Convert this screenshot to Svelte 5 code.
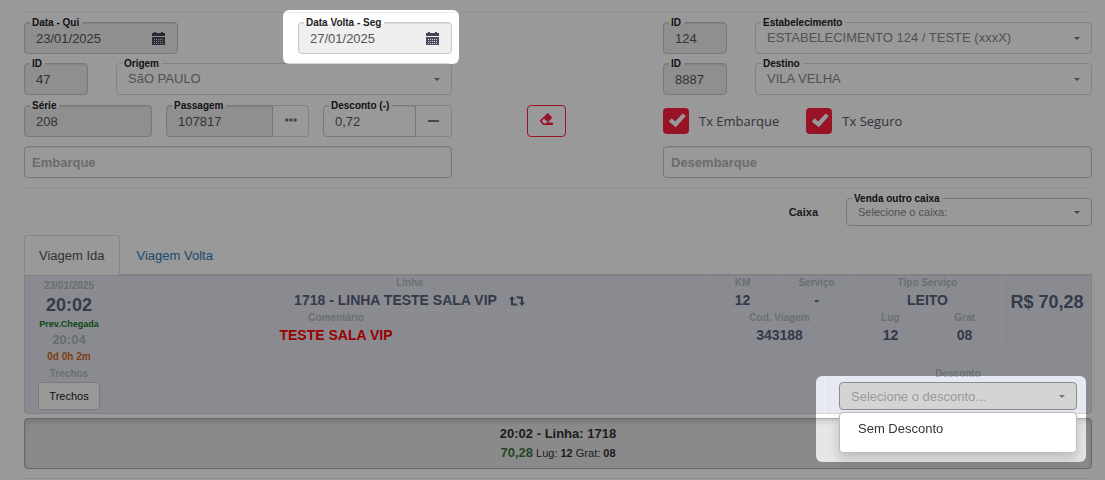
<script lang="ts">
  let dataIda = "23/01/2025";
  let dataVolta = "27/01/2025";
  let idOrigem = "47";
  let serie = "208";
  let passagem = "107817";
  let desconto = "0,72";
  let idEstabelecimento = "124";
  let idDestino = "8887";
  let txEmbarque = true;
  let txSeguro = true;
  let embarque = "";
  let desembarque = "";
  let aba = "ida";
  let menuAberto = true;

  const descontos = ["Sem Desconto"];
</script>

{#snippet calendario()}
  <svg width="13" height="13" viewBox="0 0 13 13" aria-hidden="true">
    <path d="M0 1h2V0h2v1h5V0h2v1h2v3H0z" fill="#44464f" />
    <path d="M0 5h13v8H0z" fill="#4a4e5c" />
    <path
      d="M2 7.5h10M2 9.5h10M2 11.5h10"
      stroke="#c8d2e0"
      stroke-dasharray="1 1"
    />
  </svg>
{/snippet}

{#snippet seta()}
  <svg class="seta" width="6" height="3" viewBox="0 0 6 3" aria-hidden="true">
    <path d="M0 0h6L3 3z" fill="currentColor" />
  </svg>
{/snippet}

{#snippet marca()}
  <svg width="26" height="26" viewBox="0 0 26 26" aria-hidden="true">
    <path d="M5.7 13.4 8.7 10.3 12.1 13.5 19.7 5.5 22.8 8 12.8 19.3z" fill="#fff" />
  </svg>
{/snippet}

<main class="venda">
  <div class="formulario">
    <div class="coluna">
      <div class="linha entre">
        <div class="campo data">
          <label for="data-ida">Data - Qui</label>
          <div class="caixa cinza">
            <input id="data-ida" bind:value={dataIda} readonly />
            <button class="btn-icone" aria-label="Abrir calendário">
              {@render calendario()}
            </button>
          </div>
        </div>
        <div class="campo data">
          <span class="destaque destaque-data"></span>
          <label for="data-volta">Data Volta - Seg</label>
          <div class="caixa cinza">
            <input id="data-volta" bind:value={dataVolta} readonly />
            <button class="btn-icone" aria-label="Abrir calendário">
              {@render calendario()}
            </button>
          </div>
        </div>
      </div>

      <div class="linha larga">
        <div class="campo id">
          <label for="id-origem">ID</label>
          <div class="caixa cinza">
            <input id="id-origem" bind:value={idOrigem} readonly />
          </div>
        </div>
        <div class="campo cresce">
          <label for="origem">Origem</label>
          <div class="caixa selecao">
            <select id="origem"><option>SãO PAULO</option></select>
            {@render seta()}
          </div>
        </div>
      </div>

      <div class="linha">
        <div class="campo cresce">
          <label for="serie">Série</label>
          <div class="caixa cinza">
            <input id="serie" bind:value={serie} readonly />
          </div>
        </div>
        <div class="campo passagem">
          <label for="passagem">Passagem</label>
          <div class="caixa cinza grupo">
            <input id="passagem" bind:value={passagem} readonly />
          </div>
          <button class="btn-grupo" aria-label="Buscar passagem">
            <svg width="12" height="4" viewBox="0 0 12 4" aria-hidden="true">
              <circle cx="1.8" cy="2" r="1.7" />
              <circle cx="6" cy="2" r="1.7" />
              <circle cx="10.2" cy="2" r="1.7" />
            </svg>
          </button>
        </div>
        <div class="campo desconto">
          <label for="desconto">Desconto (-)</label>
          <div class="caixa grupo">
            <input id="desconto" bind:value={desconto} />
          </div>
          <button class="btn-grupo" aria-label="Diminuir desconto">
            <svg width="11" height="2" viewBox="0 0 11 2" aria-hidden="true">
              <path d="M0 0h11v2H0z" />
            </svg>
          </button>
        </div>
      </div>

      <div class="caixa">
        <input
          class="ponto"
          aria-label="Embarque"
          placeholder="Embarque"
          bind:value={embarque}
        />
      </div>
    </div>

    <div class="acao">
      <button class="btn-limpar" aria-label="Limpar">
        <svg width="13" height="12" viewBox="0 0 13 12" aria-hidden="true">
          <path
            fill-rule="evenodd"
            d="M7.8 0 12.3 4.6 8 9.6H13V12H3.2L0 8.6V7.2zM4 5.8 1.7 7.9 4.2 10.4H5.6L7.6 8.6z"
            fill="currentColor"
          />
        </svg>
      </button>
    </div>

    <div class="coluna">
      <div class="linha larga">
        <div class="campo id">
          <label for="id-estab">ID</label>
          <div class="caixa cinza">
            <input id="id-estab" bind:value={idEstabelecimento} readonly />
          </div>
        </div>
        <div class="campo cresce">
          <label for="estab">Estabelecimento</label>
          <div class="caixa selecao">
            <select id="estab">
              <option>ESTABELECIMENTO 124 / TESTE (xxxX)</option>
            </select>
            {@render seta()}
          </div>
        </div>
      </div>

      <div class="linha larga">
        <div class="campo id">
          <label for="id-destino">ID</label>
          <div class="caixa cinza">
            <input id="id-destino" bind:value={idDestino} readonly />
          </div>
        </div>
        <div class="campo cresce">
          <label for="destino">Destino</label>
          <div class="caixa selecao">
            <select id="destino"><option>VILA VELHA</option></select>
            {@render seta()}
          </div>
        </div>
      </div>

      <div class="linha taxas">
        <label class="taxa">
          <span class="marcador">
            <input type="checkbox" bind:checked={txEmbarque} />
            {#if txEmbarque}{@render marca()}{/if}
          </span>
          Tx Embarque
        </label>
        <label class="taxa">
          <span class="marcador">
            <input type="checkbox" bind:checked={txSeguro} />
            {#if txSeguro}{@render marca()}{/if}
          </span>
          Tx Seguro
        </label>
      </div>

      <div class="caixa">
        <input
          class="ponto"
          aria-label="Desembarque"
          placeholder="Desembarque"
          bind:value={desembarque}
        />
      </div>
    </div>
  </div>

  <div class="linha-caixa">
    <strong>Caixa</strong>
    <div class="campo outro-caixa">
      <label for="outro-caixa">Venda outro caixa</label>
      <div class="caixa selecao pequena">
        <select id="outro-caixa"><option>Selecione o caixa:</option></select>
        {@render seta()}
      </div>
    </div>
  </div>

  <div class="abas" role="tablist">
    <button
      role="tab"
      class:ativa={aba === "ida"}
      aria-selected={aba === "ida"}
      on:click={() => (aba = "ida")}>Viagem Ida</button
    >
    <button
      role="tab"
      class:ativa={aba === "volta"}
      aria-selected={aba === "volta"}
      on:click={() => (aba = "volta")}>Viagem Volta</button
    >
  </div>

  <section class="viagem">
    <div class="topo">
      <div class="horarios">
        <span class="rotulo">{dataIda}</span>
        <span class="hora">20:02</span>
        <span class="previsao">Prev.Chegada</span>
        <span class="chegada">20:04</span>
        <span class="duracao">0d 0h 2m</span>
      </div>
      <div class="dados">
        <div class="dado c8">
          <span class="rotulo">Linha</span>
          <span class="valor">
            1718 - LINHA TESTE SALA VIP
            <svg width="16" height="10" viewBox="0 0 16 10" aria-hidden="true">
              <path
                d="M3 0 6 3.4H4V7.5H7.5L9 9.5H3Q2 9.5 2 8.5V3.4H0zM7 .5h6q1 0 1 1v5.1h2L13 10 10 6.6h2V2.5H8.5z"
                fill="currentColor"
              />
            </svg>
          </span>
        </div>
        <div class="dado">
          <span class="rotulo">KM</span><span class="valor">12</span>
        </div>
        <div class="dado">
          <span class="rotulo">Serviço</span><span class="valor">-</span>
        </div>
        <div class="dado c2">
          <span class="rotulo">Tipo Serviço</span><span class="valor">LEITO</span>
        </div>
        <div class="dado c6">
          <span class="rotulo">Comentário</span>
          <span class="valor alerta">TESTE SALA VIP</span>
        </div>
        <div class="dado c2 vazio"></div>
        <div class="dado c2">
          <span class="rotulo">Cod. Viagem</span><span class="valor">343188</span>
        </div>
        <div class="dado">
          <span class="rotulo">Lug</span><span class="valor">12</span>
        </div>
        <div class="dado">
          <span class="rotulo">Grat</span><span class="valor">08</span>
        </div>
      </div>
      <div class="preco">R$ 70,28</div>
    </div>

    <div class="base">
      <div class="trechos">
        <span class="rotulo">Trechos</span>
        <button>Trechos</button>
      </div>
      <div class="escolha">
        <label class="rotulo" for="tipo-desconto">Desconto</label>
        <div class="suspenso">
          <span class="destaque destaque-desconto"></span>
          <div class="caixa selecao aberta">
            <select
              id="tipo-desconto"
              on:mousedown|preventDefault={() => (menuAberto = !menuAberto)}
            >
              <option>Selecione o desconto...</option>
            </select>
            {@render seta()}
          </div>
          {#if menuAberto}
            <ul class="menu">
              {#each descontos as item}
                <li>{item}</li>
              {/each}
            </ul>
          {/if}
        </div>
      </div>
    </div>
  </section>

  <button class="resumo">
    <span class="resumo-linha">20:02 - Linha: 1718</span>
    <span class="resumo-info">
      <b class="total">70,28</b> Lug: <b>12</b> Grat: <b>08</b>
    </span>
  </button>
  <hr />
</main>

<div class="sombra"></div>

<style>
  :global(body) {
    background: #fff;
  }

  .venda {
    padding: 12px 13px 0 24px;
    font-family: "Liberation Sans", Arial, sans-serif;
    font-size: 13px;
    color: #333;
  }

  .venda * {
    box-sizing: border-box;
  }

  input,
  select,
  button {
    font: inherit;
    color: inherit;
    margin: 0;
  }

  button {
    cursor: pointer;
  }

  /* escurece a tela e deixa só os destaques claros */
  .sombra {
    position: fixed;
    inset: 0;
    background: rgba(0, 0, 0, 0.4);
    z-index: 2;
    pointer-events: none;
  }

  .destaque {
    position: absolute;
    z-index: 3;
    border-radius: 6px;
    backdrop-filter: brightness(1.67);
    pointer-events: none;
  }

  .destaque-data {
    inset: -12px -7px -10px -15px;
  }

  .destaque-desconto {
    inset: -6px -9px -52px -23px;
  }

  .formulario {
    display: grid;
    grid-template-columns: 428fr 211fr 429fr;
    border-top: 1px solid #eee;
    border-bottom: 1px solid #eee;
    padding: 9px 0;
  }

  .coluna {
    display: flex;
    flex-direction: column;
    gap: 9px;
  }

  .linha {
    display: flex;
    gap: 14px;
  }

  .linha:nth-child(3) {
    margin-top: 1px;
  }

  .linha.entre {
    justify-content: space-between;
  }

  .linha.larga {
    gap: 28px;
  }

  .campo {
    position: relative;
    display: flex;
  }

  .campo > label {
    position: absolute;
    left: 6px;
    top: -6px;
    padding: 0 3px 0 2px;
    font-size: 10px;
    line-height: 13px;
    font-weight: bold;
    color: #222;
    background: linear-gradient(#fff 8px, transparent 8px);
    z-index: 1;
  }

  .campo .caixa {
    flex: 1;
  }

  .caixa {
    display: flex;
    align-items: center;
    height: 32px;
    min-width: 0;
    border: 1px solid #c8c8c8;
    border-radius: 4px;
    background: #fff;
    box-shadow: inset 0 1px 1px rgba(0, 0, 0, 0.08);
  }

  .cinza {
    background: #eee;
  }

  .caixa input {
    flex: 1;
    min-width: 0;
    width: 100%;
    height: 100%;
    padding: 0 11px;
    border: none;
    background: transparent;
    color: #555;
    outline: none;
  }

  .caixa .ponto {
    padding: 0 7px;
  }

  .ponto::placeholder {
    color: #b4b4b4;
    font-weight: bold;
    opacity: 1;
  }

  .data {
    width: 154px;
  }

  .id {
    width: 64px;
  }

  .cresce {
    flex: 1;
  }

  .passagem {
    width: 143px;
  }

  .desconto {
    width: 129px;
  }

  .grupo {
    border-radius: 4px 0 0 4px;
  }

  .btn-icone {
    width: 37px;
    height: 100%;
    padding: 0;
    border: none;
    background: transparent;
    line-height: 0;
  }

  .btn-grupo {
    width: 36px;
    padding: 0 0 7px;
    border: 1px solid #d8d8d8;
    border-left: none;
    border-radius: 0 4px 4px 0;
    background: #fff;
    fill: #777;
  }

  .selecao {
    position: relative;
    border-color: #d8d8d8;
    color: #888;
    box-shadow: none;
  }

  .selecao select {
    flex: 1;
    min-width: 0;
    height: 100%;
    padding: 0 28px 2px 11px;
    border: none;
    appearance: none;
    background: transparent;
    outline: none;
  }

  .seta {
    position: absolute;
    right: 11px;
    color: #777;
    pointer-events: none;
  }

  .pequena {
    height: 28px;
    font-size: 11px;
    border-color: #c8c8c8;
  }

  .pequena select {
    padding-bottom: 0;
  }

  .acao {
    display: flex;
    justify-content: center;
    align-items: flex-start;
    padding: 83px 23px 0 0;
  }

  .btn-limpar {
    width: 39px;
    height: 32px;
    padding: 0 0 2px;
    border: 1px solid #ff2245;
    border-radius: 4px;
    background: #fff;
    color: #ff2245;
  }

  .taxas {
    height: 32px;
    align-items: center;
    gap: 27px;
  }

  .taxa {
    display: flex;
    align-items: center;
    gap: 10px;
    font-family: "Open Sans", sans-serif;
    color: #555566;
  }

  .marcador {
    display: grid;
  }

  .marcador > :global(*) {
    grid-area: 1 / 1;
  }

  .marcador input {
    width: 26px;
    height: 26px;
    appearance: none;
    border-radius: 4px;
    background: #ff2040;
  }

  .marcador svg {
    pointer-events: none;
  }

  .linha-caixa {
    display: flex;
    justify-content: flex-end;
    align-items: center;
    gap: 28px;
    padding: 10px 0 9px;
    font-size: 11px;
  }

  .outro-caixa {
    width: 246px;
  }

  .abas {
    display: flex;
    gap: 2px;
    border-bottom: 1px solid #ddd;
  }

  .abas button {
    height: 40px;
    margin-bottom: -1px;
    padding: 0 14px;
    border: 1px solid transparent;
    border-radius: 4px 4px 0 0;
    background: transparent;
    color: #337ab7;
  }

  .abas .ativa {
    border-color: #ddd #ddd #fff;
    background: #fff;
    color: #555;
  }

  .viagem {
    border: 1px solid #d5d5dc;
    border-radius: 0 0 4px 4px;
    background: #e7e8f2;
    font-weight: bold;
  }

  .topo {
    display: grid;
    grid-template-columns: 89px 1fr 89px;
    min-height: 91px;
    border-bottom: 1px solid #eeeef6;
  }

  .rotulo {
    font-size: 10px;
    line-height: 14px;
    color: #b2b8bf;
  }

  .horarios {
    display: flex;
    flex-direction: column;
    align-items: center;
    padding-top: 3px;
    border-right: 1px solid #eeeef6;
  }

  .hora {
    font-size: 18px;
    line-height: 24px;
    color: #56617c;
  }

  .previsao {
    font-size: 9px;
    line-height: 14px;
    color: #0b7a1c;
  }

  .chegada {
    line-height: 18px;
    color: #aeb4bb;
  }

  .duracao {
    font-size: 10px;
    line-height: 16px;
    color: #d2691e;
  }

  .dados {
    display: grid;
    grid-template-columns: repeat(12, 1fr);
    grid-template-rows: 35px 35px;
  }

  .dado {
    display: flex;
    flex-direction: column;
    align-items: center;
    border-right: 1px solid #eeeef6;
  }

  .dado:nth-child(-n + 4) {
    border-bottom: 1px solid #eeeef6;
  }

  .c2 {
    grid-column: span 2;
  }

  .c6 {
    grid-column: span 6;
    border-right: none;
  }

  .c8 {
    grid-column: span 8;
  }

  .valor {
    display: flex;
    align-items: center;
    gap: 12px;
    font-size: 14px;
    line-height: 21px;
    color: #56617c;
  }

  .alerta {
    color: #f00;
  }

  .preco {
    padding-top: 14px;
    border-left: 1px solid #eeeef6;
    font-size: 18px;
    line-height: 24px;
    text-align: center;
    white-space: nowrap;
    color: #56617c;
  }

  .base {
    display: flex;
    justify-content: space-between;
    min-height: 46px;
  }

  .trechos {
    display: flex;
    flex-direction: column;
    align-items: center;
    width: 89px;
    padding-bottom: 3px;
    border-right: 1px solid #eeeef6;
  }

  .trechos button {
    height: 28px;
    margin-top: 1px;
    padding: 0 10px;
    border: 1px solid #ccc;
    border-radius: 3px;
    background: #fff;
    font-size: 11px;
    font-weight: normal;
    color: #222;
  }

  .escolha {
    display: flex;
    flex-direction: column;
    width: 267px;
    padding: 0 14px 3px;
    border-left: 1px solid #eeeef6;
    text-align: center;
  }

  .suspenso {
    position: relative;
    margin-top: 1px;
    font-weight: normal;
    text-align: left;
  }

  .aberta {
    height: 28px;
    border-color: #8c8c8c;
    background: #d4d4d4;
    color: #999;
  }

  .aberta select {
    padding-bottom: 0;
  }

  .menu {
    position: absolute;
    top: 100%;
    left: 0;
    right: 0;
    z-index: 4;
    margin: 2px 0 0;
    padding: 5px 0 12px;
    list-style: none;
    border: 1px solid #bbb;
    border-radius: 4px;
    background: #fff;
    box-shadow: 0 6px 12px rgba(0, 0, 0, 0.18);
  }

  .menu li {
    padding: 1px 18px;
    line-height: 20px;
    color: #333;
  }

  .resumo {
    display: flex;
    flex-direction: column;
    align-items: center;
    width: 100%;
    margin-top: 4px;
    padding: 5px 0;
    border: 1px solid #adadad;
    border-radius: 4px;
    background: #e6e6e6;
    box-shadow: inset 0 3px 5px rgba(0, 0, 0, 0.125);
    font-size: 11px;
    line-height: 19px;
  }

  .resumo-linha {
    font-size: 13px;
    font-weight: bold;
  }

  .total {
    font-size: 13px;
    color: #3c763d;
  }

  hr {
    margin: 9px 0 0;
    border: none;
    border-top: 1px solid #eee;
  }
</style>
